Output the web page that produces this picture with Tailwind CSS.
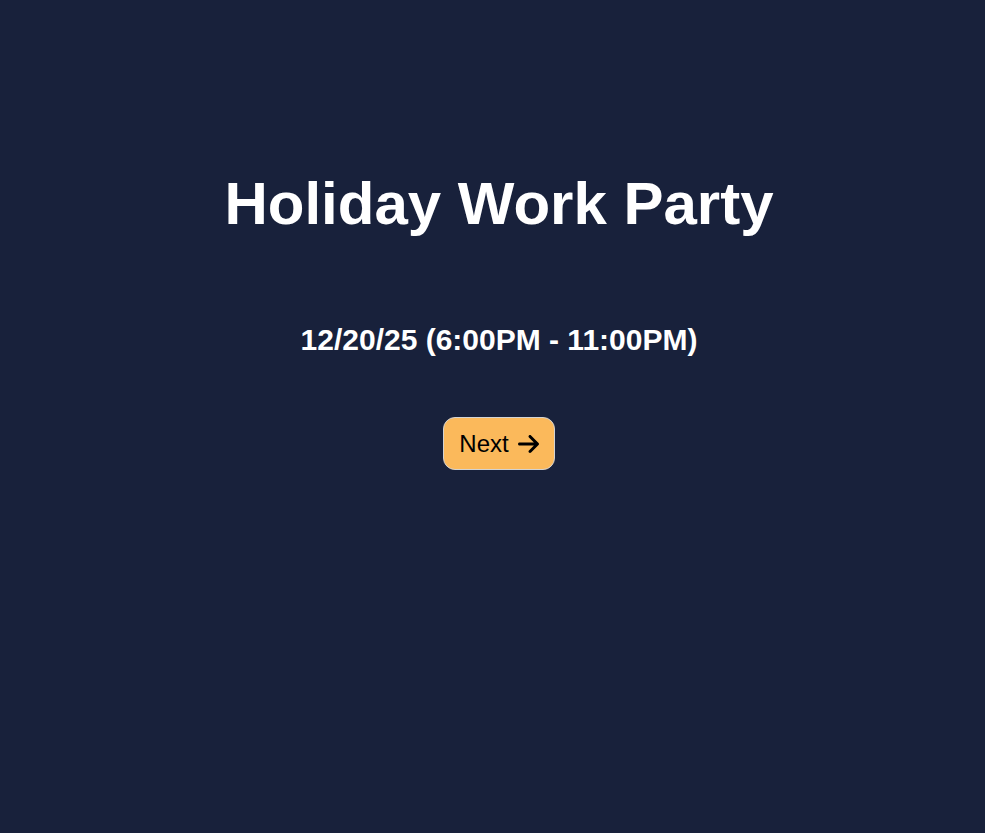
<!DOCTYPE html>
<html lang="en">
<head>
<meta charset="utf-8">
<meta name="viewport" content="width=device-width, initial-scale=1">
<title>Holiday Work Party</title>
<script src="https://cdn.jsdelivr.net/npm/@tailwindcss/browser@4"></script>
</head>
<body class="min-h-screen bg-[#18213b] font-['Liberation_Sans',Arial,sans-serif] text-white">
<main class="flex flex-col items-center pt-[169px] pl-[13px] text-center">
  <h1 class="text-[60px] leading-[70px] font-bold">Holiday Work Party</h1>
  <h2 class="mt-21 text-[30px] leading-[34px] font-bold">12/20/25 (6:00PM - 11:00PM)</h2>
  <button type="button" class="mt-15 flex items-center gap-[9px] rounded-xl border border-[#d3d3d3] bg-[#fbb95b] px-[15px] py-3 text-2xl leading-[27px] text-black">
    Next
    <svg class="h-6 w-[21px]" viewBox="0 0 448 512" fill="currentColor" aria-hidden="true"><path d="M438.6 278.6c12.500-12.500 12.500-32.800 0-45.300l-160-160c-12.500-12.500-32.800-12.500-45.300 0s-12.500 32.800 0 45.300L338.800 224 32 224c-17.700 0-32 14.300-32 32s14.300 32 32 32l306.700 0L233.400 393.400c-12.500 12.500-12.500 32.800 0 45.300s32.800 12.500 45.300 0l160-160z"/></svg>
  </button>
</main>
</body>
</html>
